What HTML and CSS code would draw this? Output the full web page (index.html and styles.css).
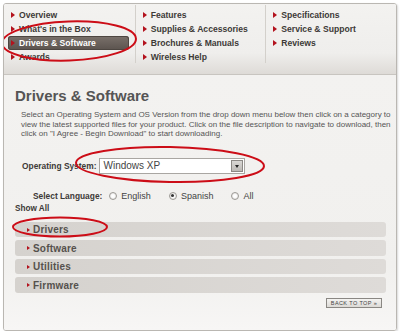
FILE: index.html
```html
<!DOCTYPE html>
<html lang="en">
<head>
    <meta charset="UTF-8">
    <meta name="viewport" content="width=device-width, initial-scale=1.0">
    <title>Drivers &amp; Software</title>
    <link rel="stylesheet" href="styles.css">
</head>
<body>
    <div class="page">
        <div class="topnav">
            <ul class="nav-col">
                <li><a href="#">Overview</a></li>
                <li><a href="#">What's in the Box</a></li>
                <li class="active"><a href="#">Drivers &amp; Software</a></li>
                <li><a href="#">Awards</a></li>
            </ul>
            <ul class="nav-col">
                <li><a href="#">Features</a></li>
                <li><a href="#">Supplies &amp; Accessories</a></li>
                <li><a href="#">Brochures &amp; Manuals</a></li>
                <li><a href="#">Wireless Help</a></li>
            </ul>
            <ul class="nav-col">
                <li><a href="#">Specifications</a></li>
                <li><a href="#">Service &amp; Support</a></li>
                <li><a href="#">Reviews</a></li>
            </ul>
        </div>

        <div class="content">
            <h1>Drivers &amp; Software</h1>
            <p class="intro">Select an Operating System and OS Version from the drop down menu below then click on a category to view the latest supported files for your product. Click on the file description to navigate to download, then click on "I Agree - Begin Download" to start downloading.</p>

            <div class="os-row">
                <span class="label">Operating System:</span>
                <div class="select">
                    <span>Windows XP</span>
                    <span class="drop"></span>
                </div>
            </div>

            <div class="lang-row">
                <span class="label">Select Language:</span>
                <span class="radio"></span><span class="opt">English</span>
                <span class="radio checked"></span><span class="opt">Spanish</span>
                <span class="radio"></span><span class="opt">All</span>
            </div>

            <div class="show-all">Show All</div>

            <ul class="cats">
                <li>Drivers</li>
                <li>Software</li>
                <li>Utilities</li>
                <li>Firmware</li>
            </ul>

            <div class="back-row">
                <a href="#" class="back-top">BACK TO TOP &raquo;</a>
            </div>
        </div>

        <!-- hand drawn red circles -->
        <svg class="marks" width="400" height="333" viewBox="0 0 400 333">
            <ellipse cx="69" cy="41" rx="67" ry="19.5" transform="rotate(-2 69 41)"/>
            <ellipse cx="170" cy="164.5" rx="94" ry="17.5" transform="rotate(1 170 164)"/>
            <ellipse cx="60" cy="227" rx="47" ry="9.5"/>
        </svg>
    </div>
</body>
</html>
```

FILE: styles.css
```css
* {
    margin: 0;
    padding: 0;
    box-sizing: border-box;
}

body {
    background: #fff;
    font-family: 'Liberation Sans', Arial, sans-serif;
    padding: 3px 0 0 3px;
}

.page {
    position: relative;
    width: 394px;
    height: 328px;
    border: 1px solid #bab7b2;
    border-radius: 3px;
    box-shadow: 1px 1px 2px rgba(0,0,0,0.15);
    overflow: hidden;
}

/* top menu */
.topnav {
    display: flex;
    height: 71px;
    background: linear-gradient(to bottom, #f3f2f0 0%, #efeeec 70%, #dedbd7 100%);
    border-bottom: 1px solid #c8c5c0;
    padding-top: 1px;
}

.nav-col {
    list-style: none;
    width: 131px;
    height: 58px;
    padding-top: 3px;
}

.nav-col + .nav-col {
    border-left: 1px solid #d3d0cb;
}

.nav-col li {
    height: 14px;
    margin-left: 4px;
    width: 121px;
    padding-left: 3px;
    display: flex;
    align-items: center;
    gap: 4px;
    border-radius: 3px;
}

.nav-col li::before {
    content: '';
    border-left: 4px solid #b3121d;
    border-top: 3px solid transparent;
    border-bottom: 3px solid transparent;
}

.nav-col a {
    color: #3d3a37;
    font-size: 8.6px;
    font-weight: bold;
    text-decoration: none;
    white-space: nowrap;
}

.nav-col li.active {
    background: linear-gradient(to bottom, #7a716b, #5b534e);
    box-shadow: inset 0 0 0 1px #4d4641;
}

.nav-col li.active a {
    color: #fff;
}

/* main area */
.content {
    height: 255px;
    background: linear-gradient(to bottom, #f3f2f0 0%, #f1f0ee 75%, #f7f6f5 100%);
    padding: 12px 0 0 11px;
}

h1 {
    font-size: 15px;
    line-height: 18px;
    color: #555;
}

.intro {
    font-size: 8px;
    line-height: 9.6px;
    color: #555;
    width: 372px;
    margin: 5px 0 0 6px;
}

.label {
    font-size: 8.4px;
    font-weight: bold;
    color: #3d3a37;
}

.os-row {
    display: flex;
    align-items: center;
    margin: 19px 0 0 7px;
    gap: 3px;
}

.select {
    width: 146px;
    height: 16px;
    background: #fff;
    border: 1px solid #a9a6a2;
    display: flex;
    align-items: center;
    justify-content: space-between;
    padding: 0 1px 0 3px;
    font-size: 10px;
    color: #444;
}

.drop {
    width: 12px;
    height: 12px;
    background: linear-gradient(to bottom, #d9d7d4, #bdbab6);
    border: 1px solid #8c8985;
    position: relative;
}

.drop::after {
    content: '';
    position: absolute;
    left: 3px;
    top: 4px;
    border-top: 3px solid #222;
    border-left: 2.5px solid transparent;
    border-right: 2.5px solid transparent;
}

.lang-row {
    display: flex;
    align-items: center;
    margin: 17px 0 0 18px;
    font-size: 9px;
    color: #444;
}

.lang-row .label {
    margin-right: 7px;
}

.radio {
    width: 8px;
    height: 8px;
    border-radius: 50%;
    border: 1px solid #9d9a96;
    background: radial-gradient(circle, #fff 30%, #d9d7d4 100%);
    margin-right: 4px;
    position: relative;
}

.radio.checked::after {
    content: '';
    position: absolute;
    left: 1.5px;
    top: 1.5px;
    width: 3px;
    height: 3px;
    border-radius: 50%;
    background: #333;
}

.opt {
    margin-right: 18px;
}

.show-all {
    font-size: 8.2px;
    font-weight: bold;
    color: #3d3a37;
    margin-top: 3px;
}

.cats {
    list-style: none;
    margin-top: 9px;
    display: flex;
    flex-direction: column;
    gap: 3px;
}

.cats li {
    width: 371px;
    height: 15.5px;
    border-radius: 3px;
    background: linear-gradient(to right, #d5d2ce, #dedbd8);
    display: flex;
    align-items: center;
    gap: 3px;
    padding-left: 12px;
    font-size: 10px;
    font-weight: bold;
    color: #55514d;
    letter-spacing: 0.2px;
}

.cats li::before {
    content: '';
    border-left: 3px solid #b3121d;
    border-top: 2.5px solid transparent;
    border-bottom: 2.5px solid transparent;
}

.back-row {
    display: flex;
    justify-content: flex-end;
    width: 371px;
    margin-top: 5px;
}

.back-top {
    width: 56px;
    height: 10px;
    border: 1px solid #8a8783;
    background: linear-gradient(to bottom, #f4f3f1, #dcdad6);
    font-size: 5.5px;
    letter-spacing: 0.4px;
    color: #444;
    text-decoration: none;
    display: flex;
    align-items: center;
    justify-content: center;
    margin-right: 4px;
}

/* red marker circles */
.marks {
    position: absolute;
    left: -4px;
    top: -4px;
    pointer-events: none;
}

.marks ellipse {
    fill: none;
    stroke: #cc0d17;
    stroke-width: 2;
}
```
